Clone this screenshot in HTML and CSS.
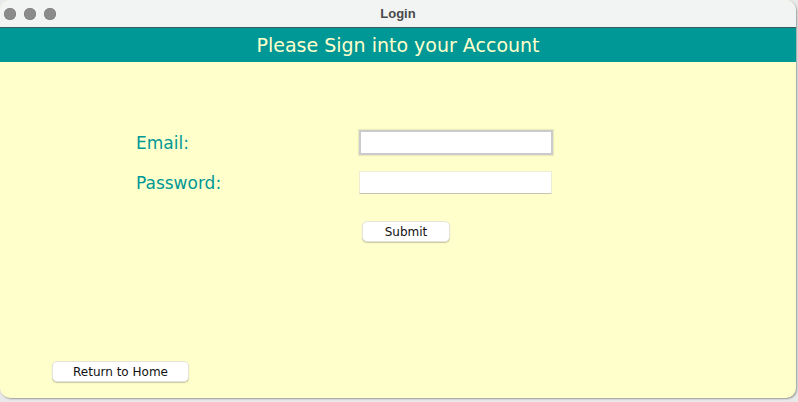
FILE: index.html
```html
<!DOCTYPE html>
<html>
<head>
<meta charset="utf-8">
<title>Login</title>
<link rel="stylesheet" href="styles.css">
</head>
<body>
<div class="window">
  <div class="titlebar">
    <div class="lights"><span class="light"></span><span class="light"></span><span class="light"></span></div>
    <div class="title">Login</div>
  </div>
  <div class="header">Please Sign into your Account</div>
  <div class="content">
    <div class="form">
      <label class="label" for="email">Email:</label>
      <input class="field field-focus" id="email" type="text">
      <label class="label" for="pw">Password:</label>
      <input class="field" id="pw" type="password">
      <div></div>
      <div class="submit-row"><button class="btn btn-submit">Submit</button></div>
    </div>
    <div class="footer"><button class="btn btn-home">Return to Home</button></div>
  </div>
</div>
</body>
</html>
```
FILE: styles.css
```css
html, body {
  margin: 0;
  padding: 0;
  width: 798px;
  height: 402px;
  overflow: hidden;
  background: #e9e9e9;
  font-family: "DejaVu Sans", "Noto Sans", sans-serif;
}
.window {
  width: 796px;
  height: 398px;
  background: #ffffcc;
  border-radius: 10px;
  overflow: hidden;
  display: flex;
  flex-direction: column;
  box-shadow: 1px 1px 2px rgba(0,0,0,0.35);
}
.titlebar {
  height: 27px;
  flex: none;
  background: #f2f3f3;
  border-bottom: 1px solid #3f5a5a;
  display: flex;
  align-items: center;
  position: relative;
}
.lights {
  display: flex;
  gap: 8px;
  padding-left: 4px;
}
.light {
  width: 12px;
  height: 12px;
  border-radius: 50%;
  background: #8b8b8b;
  box-shadow: inset 0 0 0 0.5px #7a7a7a;
}
.title {
  position: absolute;
  left: 0;
  right: 0;
  text-align: center;
  font-family: "Liberation Sans", Arial, sans-serif;
  font-weight: bold;
  font-size: 13px;
  color: #4a4a4a;
}
.header {
  height: 34px;
  flex: none;
  background: #009896;
  color: #ffffcc;
  font-size: 19px;
  display: flex;
  align-items: center;
  justify-content: center;
}
.content {
  flex: 1;
  display: flex;
  flex-direction: column;
}
.form {
  display: grid;
  grid-template-columns: 223px 194px;
  grid-template-rows: 25px 23px auto;
  row-gap: 16px;
  padding-left: 136px;
  padding-top: 68px;
  align-items: center;
}
.submit-row {
  align-self: start;
  margin-top: 11px;
  padding-left: 3px;
  height: 21px;
}
.label {
  font-size: 17px;
  color: #009896;
}
.field {
  appearance: none;
  box-sizing: border-box;
  margin: 0;
  width: 193px;
  height: 23px;
  background: #fff;
  border: 1px solid #ededd5;
  border-bottom-color: #c6c6ae;
  outline: none;
  padding: 0 4px;
}
.field-focus {
  width: 194px;
  height: 25px;
  border: 2px solid #cbcbcb;
  box-shadow: 0 0 1px 1px rgba(0,0,0,0.08);
}
.btn {
  box-sizing: border-box;
  height: 21px;
  margin: 0;
  background: #fff;
  border: 1px solid #e4e4dc;
  border-radius: 5px;
  box-shadow: 0 1px 1px rgba(0,0,0,0.22);
  font-family: "DejaVu Sans", sans-serif;
  font-size: 12px;
  color: #111;
  padding: 0;
  display: block;
}
.btn-submit { width: 88px; }
.btn-home { width: 137px; }
.footer {
  margin-top: auto;
  padding-left: 52px;
  padding-bottom: 16px;
}
```
